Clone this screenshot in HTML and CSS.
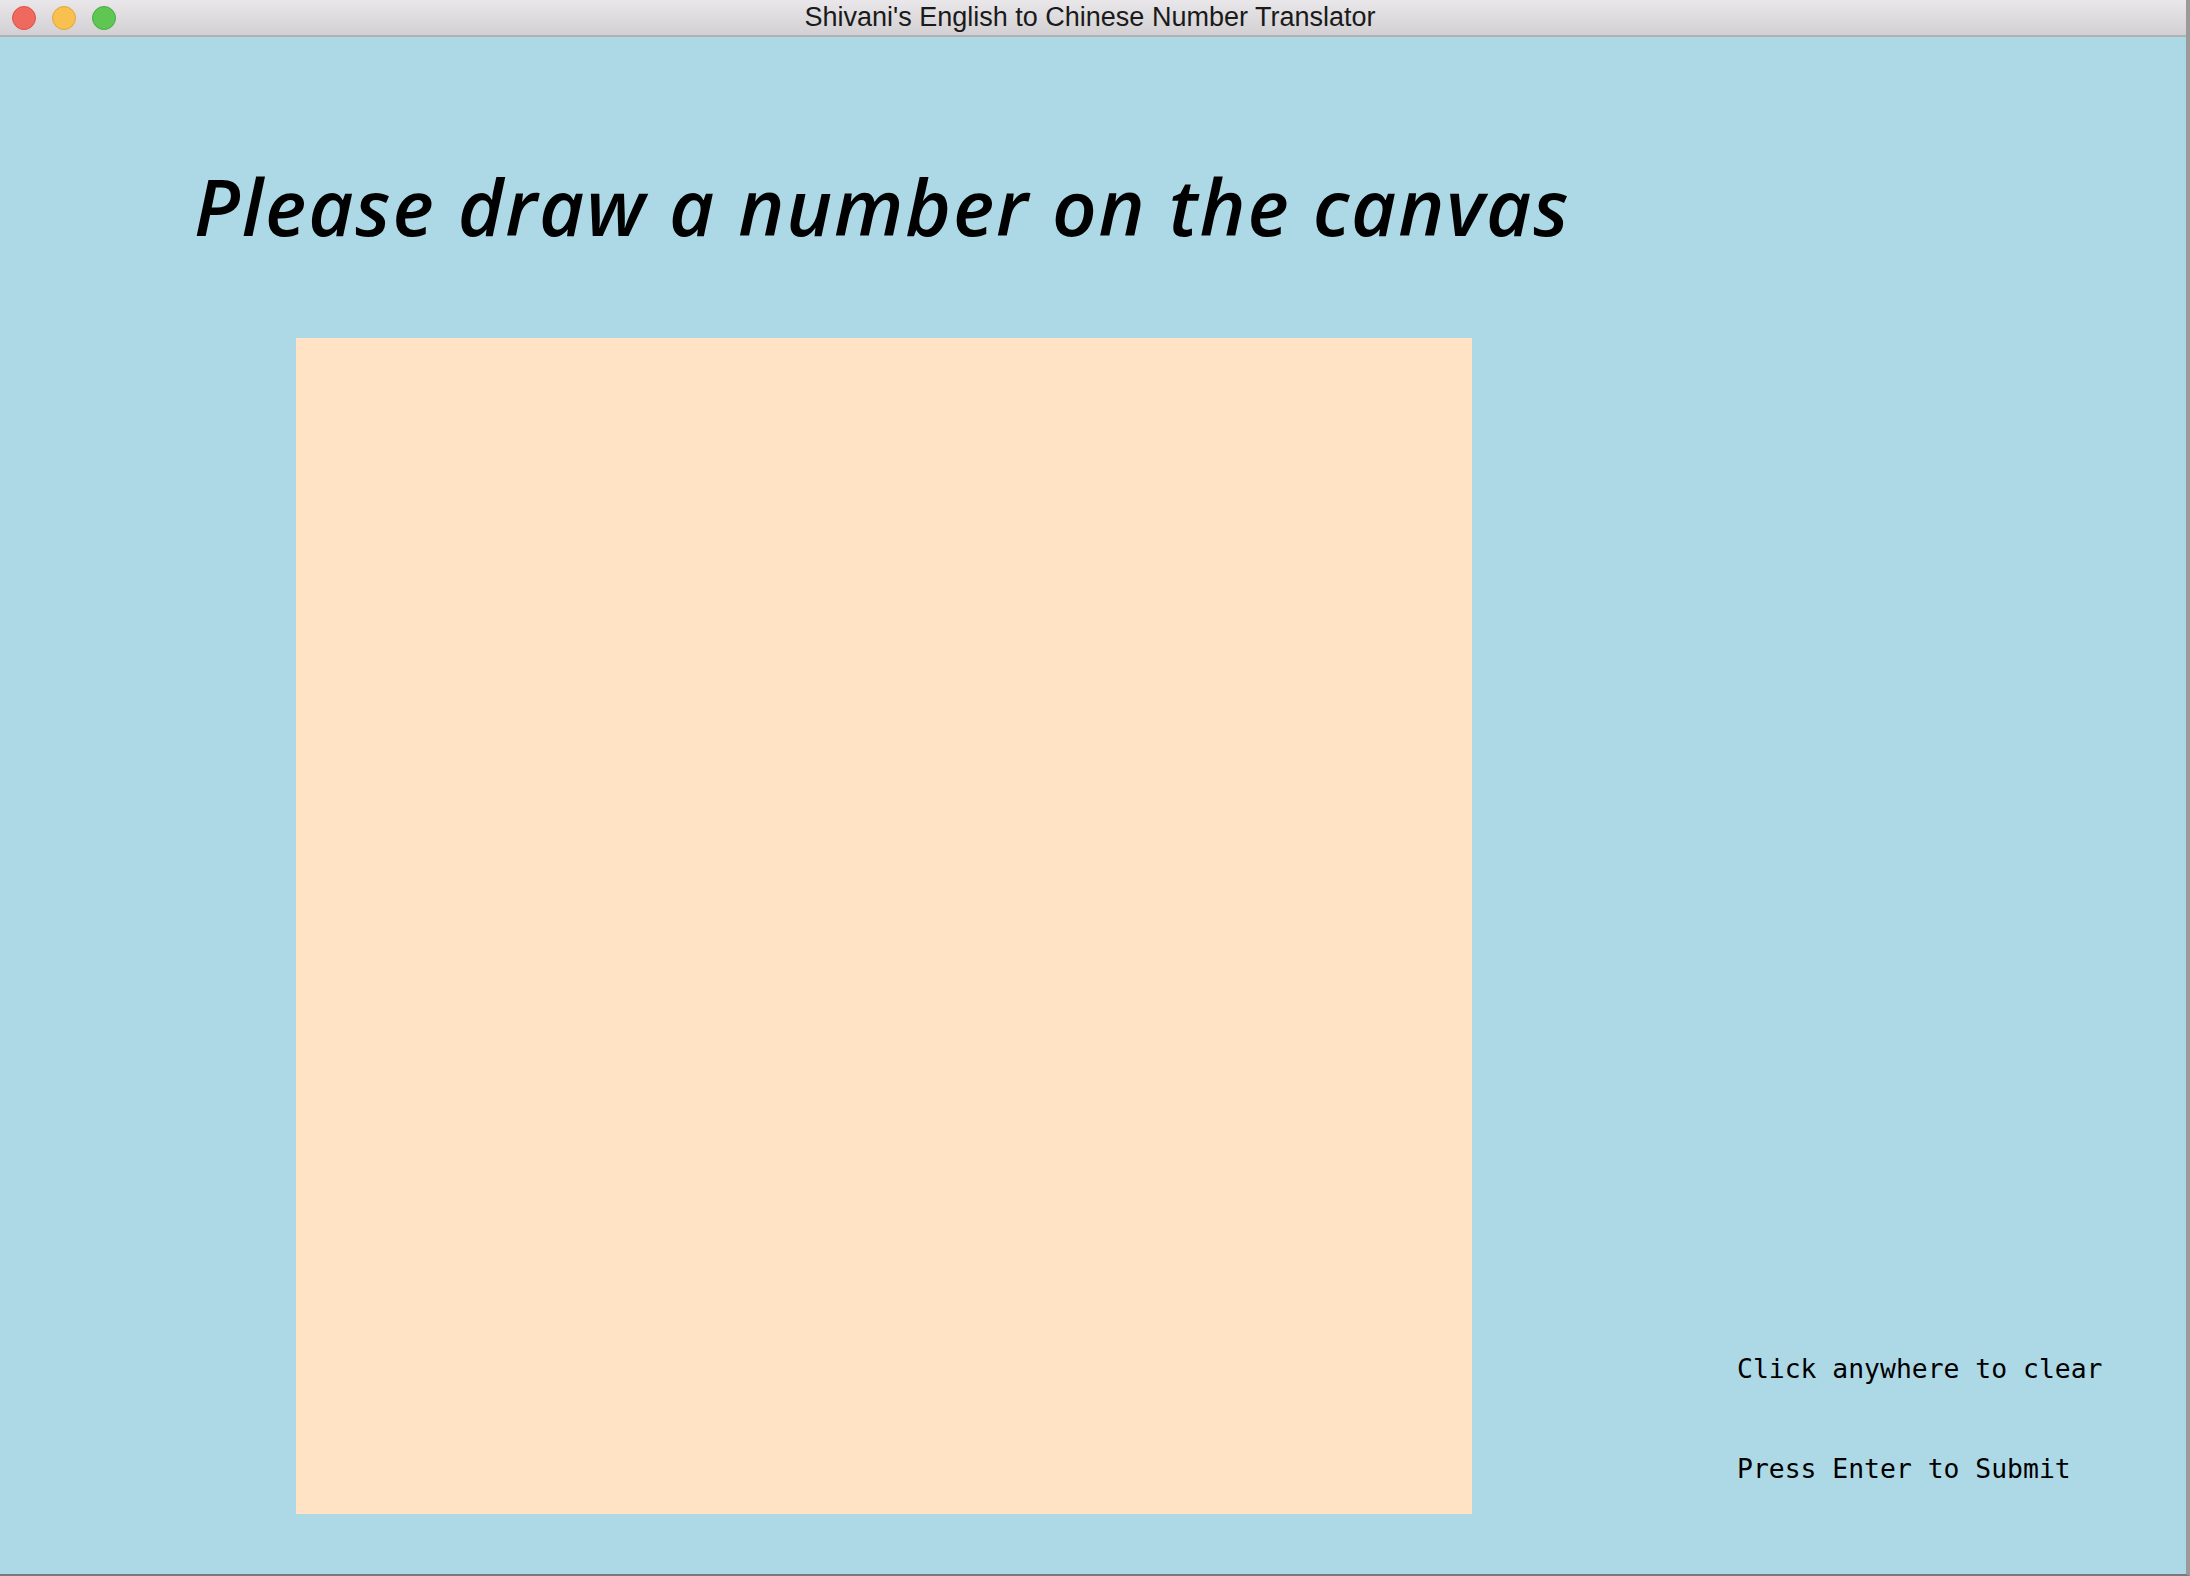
FILE: index.html
```html
<!DOCTYPE html>
<html lang="en">
<head>
<meta charset="utf-8">
<title>Shivani's English to Chinese Number Translator</title>
<link rel="stylesheet" href="styles.css">
</head>
<body>
<div class="window">
  <div class="titlebar">
    <div class="lights">
      <span class="light red"></span>
      <span class="light yellow"></span>
      <span class="light green"></span>
    </div>
    <div class="title">Shivani's English to Chinese Number Translator</div>
    <div class="spacer"></div>
  </div>
  <div class="content">
    <h1 class="heading">Please draw a number on the canvas</h1>
    <div class="stage">
      <div class="canvas"></div>
      <div class="hints">
        <p class="hint">Click anywhere to clear</p>
        <p class="hint">Press Enter to Submit</p>
      </div>
    </div>
  </div>
</div>
</body>
</html>
```

FILE: styles.css
```css
html, body {
  margin: 0;
  padding: 0;
}
body {
  width: 2190px;
  height: 1576px;
  overflow: hidden;
  background: #8c8c8c;
}
.window {
  width: 2190px;
  height: 1576px;
  display: flex;
  flex-direction: column;
  box-sizing: border-box;
  border-right: 4px solid #9a9a9a;
  border-bottom: 2px solid #7a7a7a;
}
.titlebar {
  height: 35px;
  flex: 0 0 35px;
  border-bottom: 2px solid #b3b1b3;
  background: linear-gradient(#e9e7e9, #d2d0d2);
  display: grid;
  grid-template-columns: 1fr auto 1fr;
  align-items: center;
}
.lights {
  display: flex;
  gap: 16px;
  padding-left: 12px;
  align-items: center;
}
.light {
  width: 22px;
  height: 22px;
  border-radius: 50%;
  display: block;
  border: 1px solid transparent;
}
.red { background: #f0695f; border-color: #dc5148; }
.yellow { background: #f8c04e; border-color: #e1a63a; }
.green { background: #5fc654; border-color: #4aad40; }
.title {
  font-family: "Liberation Sans", Arial, sans-serif;
  font-size: 27px;
  line-height: 35px;
  color: #1a1a1a;
  white-space: nowrap;
  padding-right: 6px;
}
.content {
  flex: 1;
  background: #add8e6;
  display: flex;
  flex-direction: column;
}
.heading {
  margin: 0;
  padding: 129px 0 0 194px;
  font-family: "Open Sans", Lato, sans-serif;
  font-style: italic;
  font-weight: 600;
  font-size: 78px;
  line-height: 80px;
  letter-spacing: 1.9px;
  color: #000;
  white-space: nowrap;
}
.stage {
  display: flex;
  margin-top: 92px;
  padding-left: 296px;
}
.canvas {
  width: 1176px;
  height: 1176px;
  background: #ffe3c4;
  flex: 0 0 auto;
}
.hints {
  display: flex;
  flex-direction: column;
  justify-content: flex-end;
  gap: 74px;
  padding: 0 0 32px 265px;
}
.hint {
  margin: 0;
  font-family: "DejaVu Sans Mono", "Liberation Mono", monospace;
  font-size: 26.4px;
  line-height: 26px;
  color: #000;
  white-space: nowrap;
}
```
